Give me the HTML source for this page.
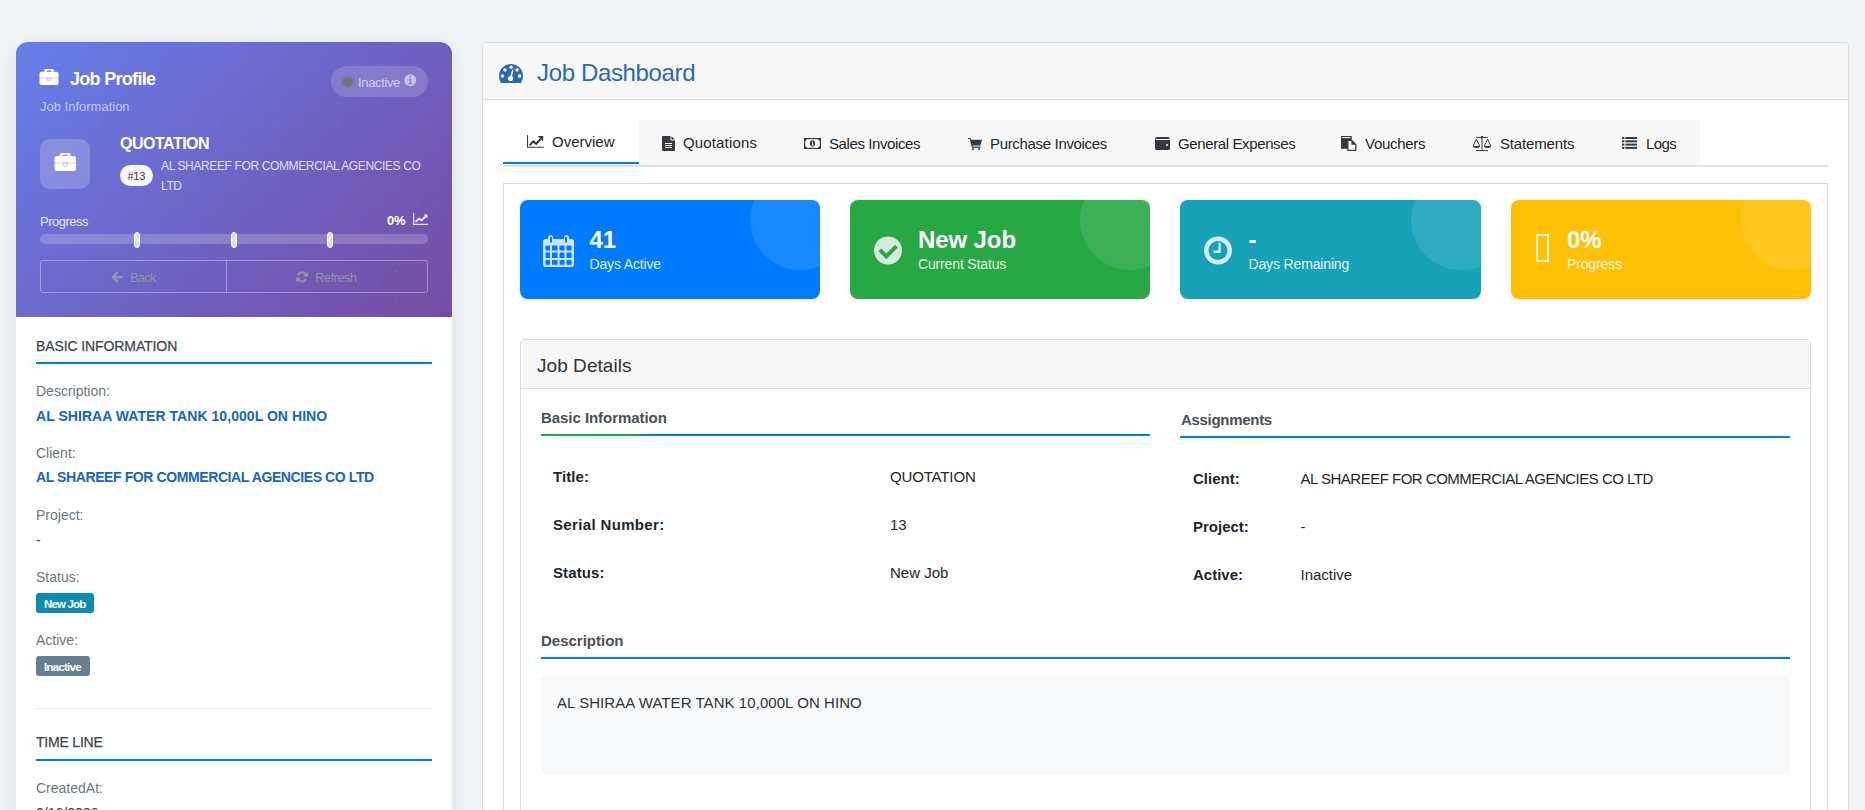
<!DOCTYPE html>
<html><head><meta charset="utf-8"><title>Job Dashboard</title>
<style>
html,body{margin:0;padding:0;}
body{width:1865px;height:810px;overflow:hidden;position:relative;background:#f0f4f7;font-family:"Liberation Sans",sans-serif;}
.b{position:absolute;}
.t{position:absolute;white-space:nowrap;}
</style></head><body>
<div class="b" style="left:16px;top:42px;width:436px;height:820px;background:#fff;border-radius:12px;box-shadow:0 4px 20px rgba(0,0,0,0.08);"></div>
<div class="b" style="left:16px;top:42px;width:436px;height:275px;background:linear-gradient(135deg,#667eea 0%,#764ba2 100%);border-radius:12px 12px 0 0;overflow:hidden;"></div>
<div class="b" style="left:16px;top:42px;width:436px;height:275px;border-radius:12px 12px 0 0;background-image:radial-gradient(circle at 50% 50%, rgba(255,255,255,0.045) 1px, transparent 1.8px),radial-gradient(circle at 50% 50%, rgba(255,255,255,0.045) 1px, transparent 1.8px);background-size:20px 20px,30px 30px;background-position:-8px -8px,5px 4px;"></div>
<svg class="b" style="left:39px;top:69px" width="20" height="16" viewBox="0 0 20 16"><path fill="#fff" fill-rule="evenodd" d="M6.3 0h7.4a1 1 0 0 1 1 1v1.8H5.3V1a1 1 0 0 1 1-1zM8 1.6v1.2h4V1.6z"/><path fill="#fff" d="M2.3 2.7h15.4a1.8 1.8 0 0 1 1.8 1.8V14.2a1.8 1.8 0 0 1-1.8 1.8H2.3a1.8 1.8 0 0 1-1.8-1.8V4.5a1.8 1.8 0 0 1 1.8-1.8z"/><rect x="0.5" y="8.5" width="19" height="0.9" fill="#6a70d8" opacity="0.35"/><rect x="8.1" y="9.1" width="3.8" height="2.4" fill="none" stroke="#6a70d8" stroke-opacity="0.4" stroke-width="0.8"/></svg>
<div class="t " style="left:70px;top:67.76px;font-size:18px;line-height:22px;color:#fff;font-weight:700;letter-spacing:-0.7px;">Job Profile</div>
<div class="t " style="left:40px;top:98.69px;font-size:13px;line-height:16px;color:rgba(255,255,255,0.6);">Job Information</div>
<div class="b" style="left:331px;top:66px;width:97px;height:31px;background:rgba(255,255,255,0.16);border-radius:16px;"></div>
<div class="b" style="left:343px;top:77px;width:10px;height:10px;background:#6c757d;border-radius:50%;box-shadow:0 0 0 2px rgba(108,117,125,0.3);"></div>
<div class="t " style="left:358px;top:74.99px;font-size:13px;line-height:16px;color:rgba(255,255,255,0.62);letter-spacing:-0.35px;">Inactive</div>
<svg class="b" style="left:404px;top:74px" width="13" height="13" viewBox="0 0 13 13"><circle cx="6.2" cy="6.3" r="6" fill="rgba(255,255,255,0.52)"/><circle cx="6.3" cy="2.5" r="0.8" fill="#8577c9"/><path d="M4.9 4.8h2.1v4.4h0.9v1H4.7v-1h0.9V5.8h-0.7z" fill="#8577c9"/></svg>
<div class="b" style="left:40px;top:139px;width:50px;height:50px;background:rgba(255,255,255,0.2);border-radius:10px;"></div>
<svg class="b" style="left:53.5px;top:153px" width="22.5" height="18" viewBox="0 0 20 16"><path fill="#fff" fill-rule="evenodd" d="M6.3 0h7.4a1 1 0 0 1 1 1v1.8H5.3V1a1 1 0 0 1 1-1zM8 1.6v1.2h4V1.6z"/><path fill="#fff" d="M2.3 2.7h15.4a1.8 1.8 0 0 1 1.8 1.8V14.2a1.8 1.8 0 0 1-1.8 1.8H2.3a1.8 1.8 0 0 1-1.8-1.8V4.5a1.8 1.8 0 0 1 1.8-1.8z"/><rect x="0.5" y="8.5" width="19" height="0.9" fill="#6a70d8" opacity="0.35"/><rect x="8.1" y="9.1" width="3.8" height="2.4" fill="none" stroke="#6a70d8" stroke-opacity="0.4" stroke-width="0.8"/></svg>
<div class="t " style="left:120px;top:134.15px;font-size:16px;line-height:19px;color:#fff;font-weight:700;letter-spacing:-0.5px;">QUOTATION</div>
<div class="b" style="left:120px;top:165px;width:33px;height:21px;background:#f8f9fa;border-radius:11px;"></div>
<div class="t " style="left:127.5px;top:170.19px;font-size:11px;line-height:13px;color:#343a40;letter-spacing:-0.3px;">#13</div>
<div class="t " style="left:161px;top:159.44px;font-size:12px;line-height:14px;color:rgba(255,255,255,0.8);letter-spacing:-0.37px;">AL SHAREEF FOR COMMERCIAL AGENCIES CO</div>
<div class="t " style="left:161px;top:178.54px;font-size:12px;line-height:14px;color:rgba(255,255,255,0.8);letter-spacing:-0.37px;">LTD</div>
<div class="t " style="left:40px;top:213.59px;font-size:13px;line-height:16px;color:rgba(255,255,255,0.85);letter-spacing:-0.5px;">Progress</div>
<div class="t " style="left:387px;top:213.49px;font-size:13px;line-height:16px;color:#fff;font-weight:700;letter-spacing:-0.2px;">0%</div>
<svg class="b" style="left:413px;top:213px" width="15" height="12" viewBox="0 0 15 12"><path d="M0.6 0v11.4H15" stroke="rgba(255,255,255,0.85)" stroke-width="1.2" fill="none"/><path d="M2.5 9l3.5-3.5 2.5 2L12.5 3.5" stroke="rgba(255,255,255,0.85)" stroke-width="1.8" fill="none"/><path d="M10.5 1.5h4v4z" fill="rgba(255,255,255,0.85)"/></svg>
<div class="b" style="left:40px;top:234px;width:388px;height:10px;background:rgba(255,255,255,0.2);border-radius:5px;"></div>
<div class="b" style="left:134px;top:232px;width:6px;height:16px;background:rgba(255,255,255,0.75);border:1px solid #fff;border-radius:3px;box-sizing:border-box;"></div>
<div class="b" style="left:231px;top:232px;width:6px;height:16px;background:rgba(255,255,255,0.75);border:1px solid #fff;border-radius:3px;box-sizing:border-box;"></div>
<div class="b" style="left:327px;top:232px;width:6px;height:16px;background:rgba(255,255,255,0.75);border:1px solid #fff;border-radius:3px;box-sizing:border-box;"></div>
<div class="b" style="left:40px;top:260px;width:388px;height:33px;border:1px solid rgba(255,255,255,0.35);border-radius:3px;box-sizing:border-box;"></div>
<div class="b" style="left:226px;top:260px;width:1px;height:33px;background:rgba(255,255,255,0.35);"></div>
<svg class="b" style="left:112px;top:271px" width="11" height="12" viewBox="0 0 11 12"><path d="M5.5 1L1 6l4.5 5M1.5 6H11" stroke="rgba(150,160,160,0.85)" stroke-width="2.6" fill="none" stroke-linejoin="round"/></svg>
<div class="t " style="left:130px;top:270.49px;font-size:13px;line-height:16px;color:rgba(150,160,160,0.85);letter-spacing:-0.8px;">Back</div>
<svg class="b" style="left:296px;top:271px" width="12" height="12" viewBox="0 0 12 12"><path d="M10.2 4.5A4.6 4.6 0 0 0 1.8 4.2M1.8 7.5A4.6 4.6 0 0 0 10.2 7.8" stroke="rgba(150,160,160,0.85)" stroke-width="2" fill="none"/><path d="M12 0.5V5.6H6.9z M0 11.5V6.4h5.1z" fill="rgba(150,160,160,0.85)"/></svg>
<div class="t " style="left:315px;top:270.49px;font-size:13px;line-height:16px;color:rgba(150,160,160,0.85);letter-spacing:-0.6px;">Refresh</div>
<div class="t " style="left:36px;top:337.65px;font-size:14px;line-height:17px;color:#40464c;letter-spacing:-0.1px;-webkit-text-stroke:0.25px #40464c;">BASIC INFORMATION</div>
<div class="b" style="left:36px;top:362px;width:396px;height:2px;background:#007bff;"></div>
<div class="t " style="left:36px;top:382.65px;font-size:14px;line-height:17px;color:#6c757d;">Description:</div>
<div class="t " style="left:36px;top:407.65px;font-size:14px;line-height:17px;color:#1565c0;font-weight:700;letter-spacing:0.05px;">AL SHIRAA WATER TANK 10,000L ON HINO</div>
<div class="t " style="left:36px;top:445.05px;font-size:14px;line-height:17px;color:#6c757d;">Client:</div>
<div class="t " style="left:36px;top:469.35px;font-size:14px;line-height:17px;color:#1565c0;font-weight:700;letter-spacing:-0.4px;">AL SHAREEF FOR COMMERCIAL AGENCIES CO LTD</div>
<div class="t " style="left:36px;top:506.55px;font-size:14px;line-height:17px;color:#6c757d;">Project:</div>
<div class="t " style="left:36px;top:531.65px;font-size:14px;line-height:17px;color:#333;">-</div>
<div class="t " style="left:36px;top:568.75px;font-size:14px;line-height:17px;color:#6c757d;">Status:</div>
<div class="b" style="left:36px;top:593px;width:58px;height:20px;background:#0f8bb3;border-radius:3px;"></div>
<div class="t " style="left:44px;top:596.51px;font-size:11.5px;line-height:14px;color:#fff;font-weight:700;letter-spacing:-0.85px;">New Job</div>
<div class="t " style="left:36px;top:632.45px;font-size:14px;line-height:17px;color:#6c757d;">Active:</div>
<div class="b" style="left:36px;top:656px;width:54px;height:20px;background:#687f91;border-radius:3px;"></div>
<div class="t " style="left:44px;top:659.51px;font-size:11.5px;line-height:14px;color:#fff;font-weight:700;letter-spacing:-0.75px;">Inactive</div>
<div class="b" style="left:36px;top:708px;width:396px;height:1px;background:#e9ecef;"></div>
<div class="t " style="left:36px;top:734.15px;font-size:14px;line-height:17px;color:#40464c;letter-spacing:-0.2px;-webkit-text-stroke:0.25px #40464c;">TIME LINE</div>
<div class="b" style="left:36px;top:759px;width:396px;height:2px;background:#007bff;"></div>
<div class="t " style="left:36px;top:780.15px;font-size:14px;line-height:17px;color:#6c757d;">CreatedAt:</div>
<div class="t " style="left:36px;top:804.65px;font-size:14px;line-height:17px;color:#333;">2/16/2026</div>
<div class="b" style="left:482px;top:42px;width:1367px;height:830px;background:#fff;border:1px solid #ddd;border-radius:4px;box-sizing:border-box;"></div>
<div class="b" style="left:483px;top:43px;width:1365px;height:56px;background:#f7f7f7;border-radius:3px 3px 0 0;border-bottom:1px solid #ddd;"></div>
<svg class="b" style="left:499px;top:64px" width="24" height="19" viewBox="0 0 24 19"><path fill="#2a69ad" d="M12 0A12 12 0 0 0 0 12c0 2.6 0.9 5 2 7h20c1.1-2 2-4.4 2-7A12 12 0 0 0 12 0z"/><g fill="#fff"><circle cx="12" cy="3.3" r="1.7"/><circle cx="6" cy="5.9" r="1.7"/><circle cx="18" cy="5.9" r="1.7"/><circle cx="3.4" cy="12" r="1.7"/><circle cx="20.6" cy="12" r="1.7"/><circle cx="11.5" cy="14.5" r="2.6"/><path d="M10.8 13.8L13.3 5.4l1.1 0.3-1.6 8.5z"/></g></svg>
<div class="t " style="left:537px;top:58.18px;font-size:24px;line-height:29px;color:#2a69ad;letter-spacing:-0.35px;">Job Dashboard</div>
<div class="b" style="left:503px;top:120px;width:1197px;height:45px;background:#f8f8f8;"></div>
<div class="b" style="left:503px;top:120px;width:136px;height:45px;background:#fff;"></div>
<div class="b" style="left:503px;top:165px;width:1325px;height:2px;background:#dee2e6;"></div>
<div class="b" style="left:503px;top:162px;width:136px;height:2px;background:#007bff;"></div>
<svg class="b" style="left:526px;top:135px" width="18" height="13" viewBox="0 0 18 13"><path d="M1.5 0v12.2H18" stroke="#343a40" stroke-width="1.1" fill="none"/><path d="M3.6 10.4l3.6-4 3 2.4 4.4-4.8" stroke="#343a40" stroke-width="2" fill="none"/><path d="M11.8 1h5.4v5.4z" fill="#343a40"/></svg>
<div class="t " style="left:552px;top:132.60px;font-size:15px;line-height:18px;color:#212529;">Overview</div>
<svg class="b" style="left:662px;top:136px" width="13" height="15" viewBox="0 0 13 15"><path fill="#343a40" d="M1 0h7.5v4.5H13V14a1 1 0 0 1-1 1H1a1 1 0 0 1-1-1V1a1 1 0 0 1 1-1zm8.5 0.3L12.8 3.5H9.5z"/><path fill="#f8f8f8" d="M3 7h7v1H3zM3 9h7v1H3zM3 11h7v1H3z"/></svg>
<div class="t " style="left:683px;top:134.40px;font-size:15px;line-height:18px;color:#212529;letter-spacing:0.15px;">Quotations</div>
<svg class="b" style="left:804px;top:138px" width="17" height="11" viewBox="0 0 17 11"><rect x="0.6" y="0.6" width="15.8" height="9.8" fill="#fff" stroke="#343a40" stroke-width="1.2"/><path d="M0 0h3A3 3 0 0 1 0 3zM17 0h-3A3 3 0 0 0 17 3zM0 11h3A3 3 0 0 0 0 8zM17 11h-3A3 3 0 0 1 17 8z" fill="#343a40"/><ellipse cx="8.5" cy="5.5" rx="2.6" ry="3.2" fill="#343a40"/><path d="M8.1 3.6h1v3.2h0.7v0.8H7.3v-0.8h0.8z" fill="#fff"/></svg>
<div class="t " style="left:829px;top:134.60px;font-size:15px;line-height:18px;color:#212529;letter-spacing:-0.4px;">Sales Invoices</div>
<svg class="b" style="left:968px;top:138px" width="14" height="12" viewBox="0 0 14 12"><path fill="#343a40" d="M0 0h2.6l0.6 1.8H14l-1.6 5.6H4.4l0.4 1.2H12.6v1.1H3.9L1.8 1.1H0z"/><circle cx="5" cy="11" r="1" fill="#343a40"/><circle cx="11" cy="11" r="1" fill="#343a40"/></svg>
<div class="t " style="left:990px;top:134.60px;font-size:15px;line-height:18px;color:#212529;letter-spacing:-0.33px;">Purchase Invoices</div>
<svg class="b" style="left:1155px;top:137px" width="15" height="13" viewBox="0 0 15 13"><path fill="#343a40" d="M2 0h11a1.5 1.5 0 0 1 1.5 1.5V2H1.2A1.2 1.2 0 0 0 1.2 3H15v8.5A1.5 1.5 0 0 1 13.5 13h-12A1.5 1.5 0 0 1 0 11.5V2a2 2 0 0 1 2-2z"/><circle cx="12" cy="8" r="1" fill="#f8f8f8"/></svg>
<div class="t " style="left:1178px;top:134.60px;font-size:15px;line-height:18px;color:#212529;letter-spacing:-0.38px;">General Expenses</div>
<svg class="b" style="left:1341px;top:136px" width="16" height="15" viewBox="0 0 16 15"><rect x="0" y="0" width="10.8" height="12.8" fill="#343a40"/><rect x="1.2" y="1" width="8.4" height="1.1" fill="#e8e8e8"/><path fill="#fff" stroke="#343a40" stroke-width="1.2" d="M6.9 4.5h4l3.9 3.9v6H6.9z"/><path fill="#343a40" d="M10.4 3.9v4.9h4.9z"/></svg>
<div class="t " style="left:1365px;top:134.60px;font-size:15px;line-height:18px;color:#212529;letter-spacing:-0.3px;">Vouchers</div>
<svg class="b" style="left:1472px;top:135px" width="20" height="17" viewBox="0 0 20 17"><path stroke="#343a40" stroke-width="1" fill="none" d="M10 2.4V15.5M4 15.6h12M4.2 2.4h11.6M4.4 4L1.2 11M4.4 4L7.6 11M15.6 4L12.4 11M15.6 4L18.8 11"/><path fill="#343a40" d="M0.9 11h7.2a3.6 1.9 0 0 1-7.2 0zM11.9 11h7.2a3.6 1.9 0 0 1-7.2 0z"/><circle cx="10" cy="2.3" r="1.3" fill="#343a40"/></svg>
<div class="t " style="left:1500px;top:134.50px;font-size:15px;line-height:18px;color:#212529;letter-spacing:-0.15px;">Statements</div>
<svg class="b" style="left:1622px;top:137px" width="15" height="12" viewBox="0 0 15 12"><g fill="#343a40"><rect x="0" y="0" width="2.4" height="2"/><rect x="3.4" y="0" width="11.6" height="2"/><rect x="0" y="3.3" width="2.4" height="2"/><rect x="3.4" y="3.3" width="11.6" height="2"/><rect x="0" y="6.6" width="2.4" height="2"/><rect x="3.4" y="6.6" width="11.6" height="2"/><rect x="0" y="9.9" width="2.4" height="2"/><rect x="3.4" y="9.9" width="11.6" height="2"/></g></svg>
<div class="t " style="left:1646px;top:134.50px;font-size:15px;line-height:18px;color:#212529;letter-spacing:-0.6px;">Logs</div>
<div class="b" style="left:503px;top:183px;width:1325px;height:700px;border:1px solid #d6d9dc;box-sizing:border-box;background:#fff;"></div>
<div class="b" style="left:520px;top:200px;width:300px;height:99px;background:#007bff;border-radius:8px;overflow:hidden;box-shadow:0 2px 6px rgba(0,0,0,0.06);"><div style="position:absolute;width:100px;height:100px;border-radius:50%;background:rgba(255,255,255,0.1);right:-30px;top:-30px"></div></div>
<div class="t " style="left:589.5px;top:225.38px;font-size:24px;line-height:29px;color:#fff;font-weight:700;letter-spacing:-0.1px;">41</div>
<div class="t " style="left:589.5px;top:255.65px;font-size:14px;line-height:17px;color:rgba(255,255,255,0.9);letter-spacing:-0.15px;">Days Active</div>
<div class="b" style="left:850px;top:200px;width:300px;height:99px;background:#28a745;border-radius:8px;overflow:hidden;box-shadow:0 2px 6px rgba(0,0,0,0.06);"><div style="position:absolute;width:100px;height:100px;border-radius:50%;background:rgba(255,255,255,0.1);right:-30px;top:-30px"></div></div>
<div class="t " style="left:918px;top:225.38px;font-size:24px;line-height:29px;color:#fff;font-weight:700;letter-spacing:-0.1px;">New Job</div>
<div class="t " style="left:918px;top:255.65px;font-size:14px;line-height:17px;color:rgba(255,255,255,0.9);letter-spacing:-0.15px;">Current Status</div>
<div class="b" style="left:1180px;top:200px;width:301px;height:99px;background:#17a2b8;border-radius:8px;overflow:hidden;box-shadow:0 2px 6px rgba(0,0,0,0.06);"><div style="position:absolute;width:100px;height:100px;border-radius:50%;background:rgba(255,255,255,0.1);right:-30px;top:-30px"></div></div>
<div class="t " style="left:1248.5px;top:225.38px;font-size:24px;line-height:29px;color:#fff;font-weight:700;letter-spacing:-0.1px;">-</div>
<div class="t " style="left:1248.5px;top:255.65px;font-size:14px;line-height:17px;color:rgba(255,255,255,0.9);letter-spacing:-0.15px;">Days Remaining</div>
<div class="b" style="left:1511px;top:200px;width:300px;height:99px;background:#ffc107;border-radius:8px;overflow:hidden;box-shadow:0 2px 6px rgba(0,0,0,0.06);"><div style="position:absolute;width:100px;height:100px;border-radius:50%;background:rgba(255,255,255,0.1);right:-30px;top:-30px"></div></div>
<div class="t " style="left:1567px;top:225.38px;font-size:24px;line-height:29px;color:#fff;font-weight:700;letter-spacing:-0.1px;">0%</div>
<div class="t " style="left:1567px;top:255.65px;font-size:14px;line-height:17px;color:rgba(255,255,255,0.9);letter-spacing:-0.15px;">Progress</div>
<svg class="b" style="left:543px;top:234px" width="31" height="33" viewBox="0 0 31 33"><path fill="rgba(255,255,255,0.8)" d="M7.5 1a2.5 2.5 0 0 1 2.5 2.5V5h11V3.5a2.5 2.5 0 0 1 5 0V5h2.5A2.5 2.5 0 0 1 31 7.5V30.5A2.5 2.5 0 0 1 28.5 33h-26A2.5 2.5 0 0 1 0 30.5V7.5A2.5 2.5 0 0 1 2.5 5H5V3.5A2.5 2.5 0 0 1 7.5 1z"/><g fill="#007bff"><rect x="7" y="3" width="2" height="5.5"/><rect x="22" y="3" width="2" height="5.5"/><rect x="2.5" y="11.5" width="4.5" height="5"/><rect x="9" y="11.5" width="5.5" height="5"/><rect x="16.5" y="11.5" width="5" height="5"/><rect x="23.5" y="11.5" width="5" height="5"/><rect x="2.5" y="18.5" width="4.5" height="5.5"/><rect x="9" y="18.5" width="5.5" height="5.5"/><rect x="16.5" y="18.5" width="5" height="5.5"/><rect x="23.5" y="18.5" width="5" height="5.5"/><rect x="2.5" y="26" width="4.5" height="4.8"/><rect x="9" y="26" width="5.5" height="4.8"/><rect x="16.5" y="26" width="5" height="4.8"/><rect x="23.5" y="26" width="5" height="4.8"/></g></svg>
<svg class="b" style="left:874px;top:236px" width="28" height="29" viewBox="0 0 28 29"><circle cx="14" cy="14.5" r="14" fill="rgba(255,255,255,0.8)"/><path d="M5.8 13.8l6.5 6.5 10.2-10.2" stroke="#28a745" stroke-width="4" fill="none"/></svg>
<svg class="b" style="left:1204px;top:236px" width="28" height="29" viewBox="0 0 28 29"><circle cx="14" cy="14.5" r="11.75" stroke="rgba(255,255,255,0.8)" stroke-width="4.5" fill="none"/><path d="M15.6 6.7V15.8H9.4" stroke="rgba(255,255,255,0.8)" stroke-width="2.4" fill="none"/></svg>
<div class="b" style="left:1536px;top:234px;width:13px;height:28px;border:2px solid rgba(255,255,255,0.8);box-sizing:border-box;"></div>
<div class="b" style="left:520px;top:339px;width:1291px;height:600px;border:1px solid #ddd;border-radius:4px;box-sizing:border-box;background:#fff;"></div>
<div class="b" style="left:521px;top:340px;width:1289px;height:48px;background:#f7f7f7;border-bottom:1px solid #ddd;border-radius:3px 3px 0 0;"></div>
<div class="t " style="left:537px;top:353.61px;font-size:19px;line-height:23px;color:#333;letter-spacing:0.05px;">Job Details</div>
<div class="t " style="left:541px;top:408.90px;font-size:15px;line-height:18px;color:#495057;font-weight:700;letter-spacing:-0.05px;">Basic Information</div>
<div class="b" style="left:541px;top:434px;width:609px;height:2px;background:#007bff;"></div>
<div class="b" style="left:541px;top:434px;width:100px;height:2px;background:#28a745;"></div>
<div class="t " style="left:1181px;top:410.70px;font-size:15px;line-height:18px;color:#495057;font-weight:700;letter-spacing:-0.3px;">Assignments</div>
<div class="b" style="left:1180px;top:436px;width:610px;height:2px;background:#007bff;"></div>
<div class="t " style="left:553px;top:467.60px;font-size:15px;line-height:18px;color:#212529;font-weight:700;letter-spacing:0.1px;">Title:</div>
<div class="t " style="left:553px;top:516.00px;font-size:15px;line-height:18px;color:#212529;font-weight:700;letter-spacing:0.35px;">Serial Number:</div>
<div class="t " style="left:553px;top:564.00px;font-size:15px;line-height:18px;color:#212529;font-weight:700;letter-spacing:0.1px;">Status:</div>
<div class="t " style="left:890px;top:467.50px;font-size:15px;line-height:18px;color:#212529;letter-spacing:-0.15px;">QUOTATION</div>
<div class="t " style="left:890px;top:516.00px;font-size:15px;line-height:18px;color:#212529;">13</div>
<div class="t " style="left:890px;top:564.00px;font-size:15px;line-height:18px;color:#212529;">New Job</div>
<div class="t " style="left:1193px;top:469.60px;font-size:15px;line-height:18px;color:#212529;font-weight:700;">Client:</div>
<div class="t " style="left:1193px;top:517.80px;font-size:15px;line-height:18px;color:#212529;font-weight:700;">Project:</div>
<div class="t " style="left:1193px;top:566.00px;font-size:15px;line-height:18px;color:#212529;font-weight:700;">Active:</div>
<div class="t " style="left:1300.5px;top:469.60px;font-size:15px;line-height:18px;color:#212529;letter-spacing:-0.5px;">AL SHAREEF FOR COMMERCIAL AGENCIES CO LTD</div>
<div class="t " style="left:1300.5px;top:517.80px;font-size:15px;line-height:18px;color:#212529;">-</div>
<div class="t " style="left:1300.5px;top:566.00px;font-size:15px;line-height:18px;color:#212529;">Inactive</div>
<div class="t " style="left:541px;top:632.00px;font-size:15px;line-height:18px;color:#495057;font-weight:700;">Description</div>
<div class="b" style="left:541px;top:657px;width:1249px;height:2px;background:#007bff;"></div>
<div class="b" style="left:541px;top:675px;width:1249px;height:100px;background:#f8f9fa;border-radius:5px;"></div>
<div class="t " style="left:557px;top:694.40px;font-size:15px;line-height:18px;color:#333;letter-spacing:0.06px;">AL SHIRAA WATER TANK 10,000L ON HINO</div>
</body></html>
